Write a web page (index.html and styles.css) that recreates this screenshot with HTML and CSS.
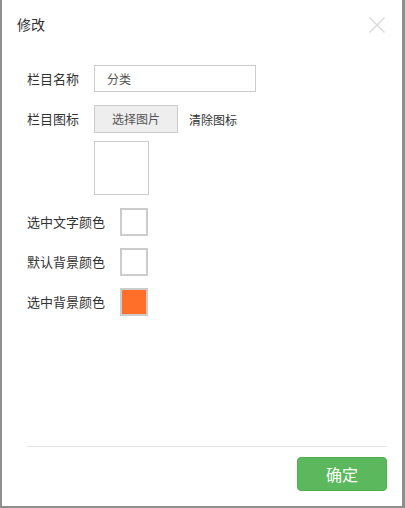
FILE: index.html
```html
<!DOCTYPE html>
<html>
<head>
<meta charset="utf-8">
<link rel="stylesheet" href="styles.css">
</head>
<body>
<div class="dialog">
  <div class="header">
    <span class="title">修改</span>
    <span class="close">
      <svg width="16" height="16" viewBox="0 0 16 16"><path d="M0.5 0.5L15.5 15.5M15.5 0.5L0.5 15.5" stroke="#d9d9d9" stroke-width="1.3" fill="none"/></svg>
    </span>
  </div>
  <div class="form">
    <div class="row">
      <span class="label">栏目名称</span>
      <div class="input">分类</div>
    </div>
    <div class="row row-icon">
      <span class="label">栏目图标</span>
      <div class="btn-file">选择图片</div>
      <span class="clear">清除图标</span>
    </div>
    <div class="preview"></div>
    <div class="row row-color first">
      <span class="label">选中文字颜色</span>
      <div class="swatch"></div>
    </div>
    <div class="row row-color">
      <span class="label">默认背景颜色</span>
      <div class="swatch"></div>
    </div>
    <div class="row row-color">
      <span class="label">选中背景颜色</span>
      <div class="swatch orange"></div>
    </div>
  </div>
  <div class="footer">
    <div class="btn-ok">确定</div>
  </div>
</div>
</body>
</html>
```
FILE: styles.css
```css
html, body {
  margin: 0;
  padding: 0;
}
body {
  background: #8e8e8e;
  width: 405px;
  height: 508px;
  overflow: hidden;
  font-family: "Noto Sans CJK SC", "Noto Sans", sans-serif;
  color: #333;
}
.dialog {
  margin-left: 2px;
  width: 400px;
  height: 506px;
  background: #fff;
  display: flex;
  flex-direction: column;
  box-sizing: border-box;
}
.header {
  height: 50px;
  display: flex;
  align-items: center;
  justify-content: space-between;
  padding: 0 17px 2px 15px;
  box-sizing: border-box;
}
.title {
  font-size: 14px;
  color: #333;
}
.close {
  display: flex;
  width: 16px;
  height: 16px;
  margin-top: 1px;
}
.form {
  flex: 1;
  padding: 15px 0 0 25px;
}
.row {
  display: flex;
  align-items: center;
}
.label {
  font-size: 13px;
  line-height: 18px;
  margin-right: 15px;
  color: #333;
}
.input {
  width: 162px;
  height: 27px;
  box-sizing: border-box;
  border: 1px solid #ccc;
  padding-left: 12px;
  font-size: 12px;
  line-height: 25px;
  color: #555;
}
.row-icon {
  margin-top: 13px;
}
.btn-file {
  width: 84px;
  height: 28px;
  box-sizing: border-box;
  border: 1px solid #ccc;
  background: #eee;
  font-size: 12px;
  line-height: 26px;
  text-align: center;
  color: #555;
}
.clear {
  font-size: 12px;
  margin-left: 11px;
  color: #333;
}
.preview {
  margin: 8px 0 0 67px;
  width: 55px;
  height: 54px;
  box-sizing: border-box;
  border: 1px solid #ccc;
}
.row-color {
  margin-top: 12px;
}
.row-color.first {
  margin-top: 13px;
}
.swatch {
  width: 28px;
  height: 28px;
  box-sizing: border-box;
  border: 2px solid #ccc;
  background: #fff;
}
.swatch.orange {
  background: #ff6f2a;
}
.footer {
  margin: 0 15px 0 25px;
  border-top: 1px solid #e5e5e5;
  padding: 10px 0 15px;
  display: flex;
  justify-content: flex-end;
}
.btn-ok {
  width: 90px;
  height: 34px;
  box-sizing: border-box;
  background: #5cb85c;
  border: 1px solid #4cae4c;
  border-radius: 4px;
  color: #fff;
  font-size: 16px;
  line-height: 32px;
  text-align: center;
}
```
